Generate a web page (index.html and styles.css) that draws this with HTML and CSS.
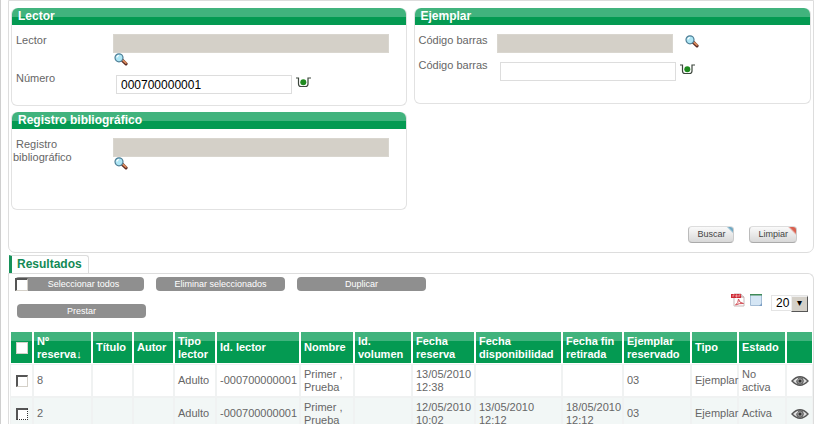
FILE: index.html
```html
<!DOCTYPE html>
<html lang="es">
<head>
<meta charset="utf-8">
<title>Reservas</title>
<link rel="stylesheet" href="styles.css">
</head>
<body>
<svg class="defs" aria-hidden="true">
  <symbol id="lens" viewBox="0 0 14 13">
    <path d="M8 7l4 3.800" stroke="#5b2a22" stroke-width="3.200" stroke-linecap="round"/>
    <path d="M8.500 7l3.500 3" stroke="#d98a5c" stroke-width="1.700" stroke-linecap="round"/>
    <circle cx="5" cy="4.800" r="4" fill="#aee6f5" stroke="#4f7f96" stroke-width="1.200"/>
    <path d="M3 4.500a2 2 0 0 1 2-2" fill="none" stroke="#fff" stroke-width="1.200"/>
  </symbol>
  <symbol id="reader" viewBox="0 0 15 11">
    <path d="M0 1h2.500v6q0 2.500 2.500 2.500h4.500q2.500 0 2.500-2.500V1H15" fill="none" stroke="#3c463c" stroke-width="1.200"/>
    <circle cx="7.300" cy="5.300" r="3" fill="#1f8a1f"/>
  </symbol>
  <symbol id="eye" viewBox="0 0 18 10">
    <path d="M1 5q8-8.500 16 0q-8 8.500-16 0z" fill="#ddd" stroke="#555" stroke-width="1.400"/>
    <circle cx="9" cy="5" r="3.300" fill="#999" stroke="#555"/>
    <circle cx="9" cy="5" r="1.500" fill="#333"/>
    <path d="M5 4.500q.5-1.500 2-2" fill="none" stroke="#fff"/>
  </symbol>
</svg>
<main class="page">
  <form class="search">
    <div class="panels">
      <fieldset class="panel">
        <legend class="panel-title">Lector</legend>
        <div class="row">
          <label for="lector">Lector</label>
          <div class="field">
            <input class="box locked wide" id="lector" readonly>
            <button class="icon-btn under" type="button" aria-label="Buscar lector"><svg class="lens"><use href="#lens"/></svg></button>
          </div>
        </div>
        <div class="row">
          <label for="numero">Número</label>
          <div class="field inline open">
            <input class="box" id="numero" value="000700000001">
            <button class="icon-btn" type="button" aria-label="Leer número"><svg class="reader"><use href="#reader"/></svg></button>
          </div>
        </div>
      </fieldset>
      <fieldset class="panel copy">
        <legend class="panel-title">Ejemplar</legend>
        <div class="row">
          <label for="codigo1">Código barras</label>
          <div class="field inline apart">
            <input class="box locked" id="codigo1" readonly>
            <button class="icon-btn" type="button" aria-label="Buscar ejemplar"><svg class="lens"><use href="#lens"/></svg></button>
          </div>
        </div>
        <div class="row">
          <label for="codigo2">Código barras</label>
          <div class="field inline open">
            <input class="box" id="codigo2">
            <button class="icon-btn" type="button" aria-label="Leer código"><svg class="reader"><use href="#reader"/></svg></button>
          </div>
        </div>
      </fieldset>
      <fieldset class="panel record">
        <legend class="panel-title">Registro bibliográfico</legend>
        <div class="row">
          <label for="registro">&nbsp;Registro bibliográfico</label>
          <div class="field">
            <input class="box locked wide" id="registro" readonly>
            <button class="icon-btn under" type="button" aria-label="Buscar registro"><svg class="lens"><use href="#lens"/></svg></button>
          </div>
        </div>
      </fieldset>
    </div>
    <div class="actions">
      <button class="push blue" type="button">Buscar</button>
      <button class="push red" type="button">Limpiar</button>
    </div>
  </form>

  <h2 class="tab">Resultados</h2>
  <section class="results">
    <div class="toolbar">
      <div class="bulk">
        <div class="with-check">
          <button class="pill" type="button">Seleccionar todos</button>
          <input class="check corner" type="checkbox" aria-label="Seleccionar todos">
        </div>
        <button class="pill" type="button">Eliminar seleccionados</button>
        <button class="pill" type="button">Duplicar</button>
        <button class="pill second" type="button">Prestar</button>
      </div>
      <div class="export">
        <a href="#pdf" aria-label="Exportar a PDF"><svg class="doc" viewBox="0 0 14 14">
          <path d="M3 1h7l3 3v9H3z" fill="#fff" stroke="#c9b9b9"/>
          <path d="M10 1v3h3" fill="#eee" stroke="#b99"/>
          <path d="M0 1h10v4H0z" fill="#cf2a35"/>
          <path d="M2 4V2h1.500M5 2v2h1V2zM8 4V2h1.500" stroke="#f6c5c8" stroke-width=".7" fill="none"/>
          <path d="M4.500 12q3-2 3-6q.5 4 5 4.500q-4-.5-8 1.500z" fill="none" stroke="#d3525a"/>
        </svg></a>
        <a href="#lista" aria-label="Exportar listado"><svg class="doc" viewBox="0 0 14 14">
          <path d="M1.500 1.500h11v11h-11z" fill="#d5e6f5" stroke="#a4bdd6"/>
          <path d="M1 1h12v1.500H1z" fill="#3f8a58"/>
          <path d="M10 13l3-3v3z" fill="#7d9fc4"/>
        </svg></a>
        <div class="picker">
          <select aria-label="Resultados por página"><option>20</option><option>50</option></select>
        </div>
      </div>
    </div>
    <table class="grid">
      <colgroup>
        <col class="w21"><col class="w57"><col class="w39"><col class="w39"><col class="w40"><col class="w82"><col class="w52"><col class="w56"><col class="w61"><col class="w85"><col class="w59"><col class="w66"><col class="w45"><col class="w46"><col class="w25">
      </colgroup>
      <thead>
        <tr>
          <th class="mid"><input class="check" type="checkbox" aria-label="Seleccionar página"></th>
          <th>Nº<br>reserva↓</th><th>Título</th><th>Autor</th><th>Tipo<br>lector</th><th>Id. lector</th><th>Nombre</th><th>Id.<br>volumen</th><th>Fecha<br>reserva</th><th>Fecha<br>disponibilidad</th><th>Fecha fin<br>retirada</th><th>Ejemplar<br>reservado</th><th>Tipo</th><th>Estado</th><th></th>
        </tr>
      </thead>
      <tbody>
        <tr>
          <td class="mid"><input class="check" type="checkbox" aria-label="Reserva 8"></td>
          <td>8</td><td></td><td></td><td>Adulto</td><td>-000700000001</td><td>Primer ,<br>Prueba</td><td></td><td>13/05/2010<br>12:38</td><td></td><td></td><td>03</td><td>Ejemplar</td><td>No<br>activa</td>
          <td class="mid"><a href="#r8" aria-label="Ver reserva 8"><svg class="eye"><use href="#eye"/></svg></a></td>
        </tr>
        <tr>
          <td class="mid"><input class="check dotted" type="checkbox" aria-label="Reserva 2"></td>
          <td>2</td><td></td><td></td><td>Adulto</td><td>-000700000001</td><td>Primer ,<br>Prueba</td><td></td><td>12/05/2010<br>10:02</td><td>13/05/2010<br>12:12</td><td>18/05/2010<br>12:12</td><td>03</td><td>Ejemplar</td><td>Activa</td>
          <td class="mid"><a href="#r2" aria-label="Ver reserva 2"><svg class="eye"><use href="#eye"/></svg></a></td>
        </tr>
      </tbody>
    </table>
  </section>
</main>
</body>
</html>
```
FILE: styles.css
```css
* { box-sizing: border-box; }
html { overflow: hidden; background: #fff; }
body {
  margin: 0;
  font: 11px/13px "Liberation Sans", Arial, sans-serif;
  color: #666;
}
.defs { position: absolute; width: 0; height: 0; }
.page {
  border-left: 1px solid #cfcfcf;
  padding: 0 4px 0 7px;
}
svg { display: block; }
button, input, select { font: inherit; margin: 0; }
.lens { width: 14px; height: 13px; }
.reader { width: 15px; height: 11px; }
.eye { width: 18px; height: 10px; margin: 0 auto; }
.doc { width: 14px; height: 14px; }

/* Search form */
.search {
  border: 1px solid #ddd;
  border-radius: 0 0 7px 7px;
  padding: 7px 2px 9px;
}
.panels {
  display: grid;
  grid-template-columns: 396fr 398fr;
  gap: 6px 7px;
  align-items: start;
}
.panel {
  min-width: 0;
  min-height: 98px;
  margin: 0;
  padding: 0;
  border: 1px solid #e2e2e2;
  border-top: 0;
  border-radius: 6px;
}
.copy { min-height: 96px; }
.panel-title {
  float: left;
  width: 100%;
  height: 17px;
  padding: 0 6px;
  border-radius: 6px 6px 0 0;
  background: linear-gradient(#41b37d 0 9px, #049a52 9px);
  color: #fff;
  font-size: 12px;
  line-height: 17px;
  font-weight: bold;
}
.row {
  clear: both;
  display: flex;
  align-items: flex-start;
  padding: 9px 4px 0;
}
.row + .row { padding-top: 6px; }
.row label { width: 97px; }
.record .row { padding-left: 1px; }
.record label { width: 100px; }
.copy .row label { width: 78px; }
.field.inline { display: flex; align-items: center; gap: 4px; }
.field.open { padding: 3px 0 0 3px; }
.field.apart { gap: 12px; }
.field.open .icon-btn { padding-bottom: 4px; }
.field.apart .icon-btn { padding-bottom: 4px; }
.box {
  display: block;
  width: 176px;
  height: 19px;
  padding: 1px 4px;
  border: 1px solid #ddd;
  background: #fff;
  color: #000;
  font-size: 12px;
}
.box.locked { background: #d4d0c8; border-color: #d9d6cf; }
.box.wide { width: 276px; }
.icon-btn {
  display: block;
  padding: 0;
  border: 0;
  background: none;
}
.icon-btn.under { margin: 0 0 0 1px; }
.actions {
  display: flex;
  justify-content: flex-end;
  gap: 15px;
  padding: 16px 14px 0;
}
.push {
  height: 17px;
  padding: 0 8px;
  border: 1px solid #bbb;
  border-color: #ddd #ccc #aaa #bbb;
  border-radius: 4px;
  color: #444;
  font-size: 9px;
  line-height: 13px;
}
.blue { background: linear-gradient(225deg, #6fa9c4 0 3px, transparent 5px), linear-gradient(#fafafa, #d8d8d8); }
.red { background: linear-gradient(225deg, #d9604f 0 4px, transparent 6px), linear-gradient(#fafafa, #d8d8d8); }

/* Results */
.tab {
  width: 80px;
  height: 18px;
  margin: 2px 0 0 1px;
  padding: 0 5px;
  border: 1px solid #ddd;
  border-left: 3px solid #17915a;
  border-bottom: 0;
  border-radius: 0 3px 0 0;
  color: #128a55;
  font-size: 12px;
  line-height: 17px;
}
.results {
  border: 1px solid #ddd;
  border-bottom: 0;
  border-radius: 0 6px 0 0;
}
.toolbar {
  display: flex;
  justify-content: space-between;
  align-items: flex-end;
  padding: 3px 5px 12px 6px;
}
.bulk {
  display: grid;
  grid-template-columns: repeat(3, 129px);
  gap: 13px 12px;
}
.with-check { position: relative; }
.with-check .pill { padding-left: 8px; }
.pill {
  display: block;
  width: 129px;
  height: 14px;
  padding: 0;
  border: 0;
  border-radius: 4px;
  background: #8f8f8f;
  color: #fff;
  font-size: 9px;
  line-height: 14px;
}
.second { margin-left: 2px; }
.check {
  appearance: none;
  display: block;
  width: 12px;
  height: 12px;
  margin: 0 auto;
  border: 1px solid #d4d0c8;
  border-top: 2px solid #555;
  border-left: 2px solid #555;
  background: #fff;
}
thead .check { border: 1px solid #d4d0c8; }
.dotted { border-right: 1px dotted #333; border-bottom: 1px dotted #333; }
.corner { position: absolute; left: 0; top: 1px; width: 13px; height: 13px; }
.export {
  display: flex;
  align-items: flex-start;
  gap: 4px;
  padding-bottom: 7px;
}
.picker { position: relative; margin: 2px 0 0 4px; }
.picker select {
  appearance: none;
  display: block;
  width: 37px;
  height: 16px;
  padding: 0 4px;
  border: 1px solid #e4e4e4;
  border-radius: 0;
  background: #fff;
  color: #000;
  font-size: 12px;
  line-height: 14px;
}
.picker::after {
  content: "▾";
  position: absolute;
  right: 0;
  top: 1px;
  width: 15px;
  height: 14px;
  border: 1px solid #777;
  border-color: #eee #555 #555 #eee;
  background: #d4d0c8;
  color: #000;
  font: 10px/12px "DejaVu Sans", sans-serif;
  text-align: center;
  pointer-events: none;
}
.grid {
  width: 100%;
  table-layout: fixed;
  border-collapse: separate;
  border-spacing: 2px;
}
.grid th, .grid td { height: 31px; padding: 0 0 0 3px; text-align: left; white-space: nowrap; }
.grid th {
  background: linear-gradient(#41b37d 0 9px, #049a52 9px);
  color: #fff;
}
.grid td { box-shadow: 0 0 0 1px #f0f2f2; }
.grid tbody tr:nth-child(even) td { background: #f2f7f6; }
.grid .mid { padding: 0; }
.w21 { width: 21px; }
.w57 { width: 57px; }
.w39 { width: 39px; }
.w40 { width: 40px; }
.w82 { width: 82px; }
.w52 { width: 52px; }
.w56 { width: 56px; }
.w61 { width: 61px; }
.w85 { width: 85px; }
.w59 { width: 59px; }
.w66 { width: 66px; }
.w45 { width: 45px; }
.w46 { width: 46px; }
.w25 { width: 25px; }
```
